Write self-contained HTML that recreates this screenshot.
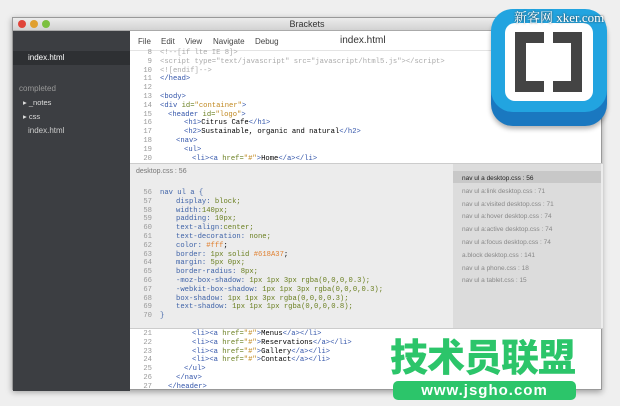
<!DOCTYPE html>
<html><head><meta charset="utf-8"><style>
*{margin:0;padding:0;box-sizing:border-box}
body{width:620px;height:406px;background:#efefef;position:relative;overflow:hidden;font-family:"Liberation Sans",sans-serif}
.win{position:absolute;left:12px;top:17px;width:590px;height:373px;background:#fff;box-shadow:0 2px 6px rgba(0,0,0,.35);border:1px solid #999}
.title{position:absolute;left:0;top:0;width:100%;height:13px;background:linear-gradient(#ececec,#d2d2d2);border-bottom:1px solid #aaa;font-size:9px;text-align:center;line-height:13px;color:#333}
.dot{position:absolute;top:2px;width:8px;height:8px;border-radius:50%}
.side{position:absolute;left:0;top:13px;width:117px;height:360px;background:#3c3e42;color:#ddd;font-size:8px}
.code{font-family:"Liberation Mono",monospace;font-size:7.2px;position:absolute}
.code div,.list div{white-space:pre;height:8.8px}
.ln{color:#999;display:inline-block;width:22px;text-align:right}
.t{color:#3355aa}.s{color:#c08820}.k{color:#3f63a8}.v{color:#6a7f20}.o{color:#e08030}
</style></head><body>
<div class="win">
 <div class="title">Brackets
  <div class="dot" style="left:5px;background:#e0443a"></div>
  <div class="dot" style="left:17px;background:#e0a030"></div>
  <div class="dot" style="left:29px;background:#7cc040"></div>
 </div>
 <div class="side">
  <div style="position:absolute;left:0;top:20px;width:117px;height:14px;background:#2e3033"></div>
  <div style="position:absolute;left:15px;top:22px;color:#fff">index.html</div>
  <div style="position:absolute;left:6px;top:53px;color:#999;font-size:8px">completed</div>
  <div style="position:absolute;left:10px;top:67px;font-size:7.5px;color:#ddd">▸ _notes</div>
  <div style="position:absolute;left:10px;top:81px;font-size:7.5px;color:#ddd">▸ css</div>
  <div style="position:absolute;left:15px;top:95px;color:#ccc">index.html</div>
 </div>
 <div style="position:absolute;left:117px;top:13px;width:473px;height:20px;font-size:8px;color:#444;border-bottom:1px solid #e4e4e4">
  <span style="position:absolute;left:8px;top:6px">File</span>
  <span style="position:absolute;left:31px;top:6px">Edit</span>
  <span style="position:absolute;left:55px;top:6px">View</span>
  <span style="position:absolute;left:83px;top:6px">Navigate</span>
  <span style="position:absolute;left:125px;top:6px">Debug</span>
  <span style="position:absolute;left:210px;top:4px;font-size:10px;color:#333">index.html</span>
 </div>
 <div class="code" style="left:117px;top:31px;line-height:8.8px"><div><span class="ln">8</span><span style="margin-left:8px;color:#aaa">&lt;!--[if lte IE 8]&gt;</span></div><div><span class="ln">9</span><span style="margin-left:8px;color:#aaa">&lt;script type="text/javascript" src="javascript/html5.js"&gt;&lt;/script&gt;</span></div><div><span class="ln">10</span><span style="margin-left:8px;color:#aaa">&lt;![endif]--&gt;</span></div><div><span class="ln">11</span><span style="margin-left:8px" class="t">&lt;/head&gt;</span></div><div><span class="ln">12</span></div><div><span class="ln">13</span><span style="margin-left:8px" class="t">&lt;body&gt;</span></div><div><span class="ln">14</span><span style="margin-left:8px"><span class="t">&lt;div</span> <span class="v">id=</span><span class="s">"container"</span><span class="t">&gt;</span></span></div><div><span class="ln">15</span><span style="margin-left:16px"><span class="t">&lt;header</span> <span class="v">id=</span><span class="s">"logo"</span><span class="t">&gt;</span></span></div><div><span class="ln">16</span><span style="margin-left:32px"><span class="t">&lt;h1&gt;</span>Citrus Cafe<span class="t">&lt;/h1&gt;</span></span></div><div><span class="ln">17</span><span style="margin-left:32px"><span class="t">&lt;h2&gt;</span>Sustainable, organic and natural<span class="t">&lt;/h2&gt;</span></span></div><div><span class="ln">18</span><span style="margin-left:24px" class="t">&lt;nav&gt;</span></div><div><span class="ln">19</span><span style="margin-left:32px" class="t">&lt;ul&gt;</span></div><div><span class="ln">20</span><span style="margin-left:40px"><span class="t">&lt;li&gt;&lt;a</span> <span class="v">href=</span><span class="s">"#"</span><span class="t">&gt;</span>Home<span class="t">&lt;/a&gt;&lt;/li&gt;</span></span></div></div>
 <div style="position:absolute;left:117px;top:145px;width:473px;height:166px;background:#ececec;border-top:1px solid #ccc;border-bottom:1px solid #ccc"></div>
 <div style="position:absolute;left:440px;top:146px;width:148px;height:164px;background:#dcdcdc"></div>
 <div style="position:absolute;left:440px;top:153px;width:148px;height:12px;background:#c8c8c8"></div>
 <div class="list" style="position:absolute;left:449px;top:155px;font-size:6.5px;line-height:12.8px;color:#888"><div style="color:#222;height:12.8px">nav ul a desktop.css : 56</div><div style="height:12.8px">nav ul a:link desktop.css : 71</div><div style="height:12.8px">nav ul a:visited desktop.css : 71</div><div style="height:12.8px">nav ul a:hover desktop.css : 74</div><div style="height:12.8px">nav ul a:active desktop.css : 74</div><div style="height:12.8px">nav ul a:focus desktop.css : 74</div><div style="height:12.8px">a.block desktop.css : 141</div><div style="height:12.8px">nav ul a phone.css : 18</div><div style="height:12.8px">nav ul a tablet.css : 15</div></div>
 <div style="position:absolute;left:123px;top:150px;font-size:7px;color:#777">desktop.css : 56</div>
 <div class="code" style="left:117px;top:171px;line-height:8.8px"><div><span class="ln">56</span><span style="margin-left:8px" class="k">nav ul a {</span></div><div><span class="ln">57</span><span style="margin-left:24px"><span class="k">display:</span> <span class="v">block;</span></span></div><div><span class="ln">58</span><span style="margin-left:24px"><span class="k">width:</span><span class="v">140px;</span></span></div><div><span class="ln">59</span><span style="margin-left:24px"><span class="k">padding:</span> <span class="v">10px;</span></span></div><div><span class="ln">60</span><span style="margin-left:24px"><span class="k">text-align:</span><span class="v">center;</span></span></div><div><span class="ln">61</span><span style="margin-left:24px"><span class="k">text-decoration:</span> <span class="v">none;</span></span></div><div><span class="ln">62</span><span style="margin-left:24px"><span class="k">color:</span> <span class="o">#fff</span>;</span></div><div><span class="ln">63</span><span style="margin-left:24px"><span class="k">border:</span> <span class="v">1px solid</span> <span class="o">#618A37</span>;</span></div><div><span class="ln">64</span><span style="margin-left:24px"><span class="k">margin:</span> <span class="v">5px 0px;</span></span></div><div><span class="ln">65</span><span style="margin-left:24px"><span class="k">border-radius:</span> <span class="v">8px;</span></span></div><div><span class="ln">66</span><span style="margin-left:24px"><span class="k">-moz-box-shadow:</span> <span class="v">1px 1px 3px rgba(0,0,0,0.3);</span></span></div><div><span class="ln">67</span><span style="margin-left:24px"><span class="k">-webkit-box-shadow:</span> <span class="v">1px 1px 3px rgba(0,0,0,0.3);</span></span></div><div><span class="ln">68</span><span style="margin-left:24px"><span class="k">box-shadow:</span> <span class="v">1px 1px 3px rgba(0,0,0,0.3);</span></span></div><div><span class="ln">69</span><span style="margin-left:24px"><span class="k">text-shadow:</span> <span class="v">1px 1px 1px rgba(0,0,0,0.8);</span></span></div><div><span class="ln">70</span><span style="margin-left:8px" class="k">}</span></div></div>
 <div class="code" style="left:117px;top:312px;line-height:8.8px"><div><span class="ln">21</span><span style="margin-left:40px"><span class="t">&lt;li&gt;&lt;a</span> <span class="v">href=</span><span class="s">"#"</span><span class="t">&gt;</span>Menus<span class="t">&lt;/a&gt;&lt;/li&gt;</span></span></div><div><span class="ln">22</span><span style="margin-left:40px"><span class="t">&lt;li&gt;&lt;a</span> <span class="v">href=</span><span class="s">"#"</span><span class="t">&gt;</span>Reservations<span class="t">&lt;/a&gt;&lt;/li&gt;</span></span></div><div><span class="ln">23</span><span style="margin-left:40px"><span class="t">&lt;li&gt;&lt;a</span> <span class="v">href=</span><span class="s">"#"</span><span class="t">&gt;</span>Gallery<span class="t">&lt;/a&gt;&lt;/li&gt;</span></span></div><div><span class="ln">24</span><span style="margin-left:40px"><span class="t">&lt;li&gt;&lt;a</span> <span class="v">href=</span><span class="s">"#"</span><span class="t">&gt;</span>Contact<span class="t">&lt;/a&gt;&lt;/li&gt;</span></span></div><div><span class="ln">25</span><span style="margin-left:32px" class="t">&lt;/ul&gt;</span></div><div><span class="ln">26</span><span style="margin-left:24px" class="t">&lt;/nav&gt;</span></div><div><span class="ln">27</span><span style="margin-left:16px" class="t">&lt;/header&gt;</span></div></div>
</div>
<div style="position:absolute;left:491px;top:12px;width:116px;height:114px;border-radius:22px;background:#1a78c0;box-shadow:0 3px 5px rgba(0,0,0,.3)"></div>
<div style="position:absolute;left:491px;top:9px;width:116px;height:103px;border-radius:22px;background:#22a4e0"></div>
<div style="position:absolute;left:505px;top:23px;width:88px;height:78px;border-radius:10px;background:#fff"></div>
<div style="position:absolute;left:515px;top:32px;width:29px;height:60px;background:#444"></div>
<div style="position:absolute;left:526px;top:43px;width:18px;height:38px;background:#fff"></div>
<div style="position:absolute;left:553px;top:32px;width:29px;height:60px;background:#444"></div>
<div style="position:absolute;left:553px;top:43px;width:18px;height:38px;background:#fff"></div>
<div style="position:absolute;left:514px;top:7px;font-family:'Liberation Serif','Noto Serif CJK SC',serif;font-size:13px;color:#fff;text-shadow:0 0 2px #333">新客网 xker.com</div>
<div style="position:absolute;left:390px;top:333px;font-family:'Noto Sans CJK SC',sans-serif;font-weight:900;font-size:38px;letter-spacing:-1px;color:#2cc56a;line-height:44px">技术员联盟</div>
<div style="position:absolute;left:393px;top:381px;width:183px;height:19px;border-radius:5px;background:#2cc56a;color:#fff;font-weight:bold;font-size:15px;text-align:center;line-height:19px;letter-spacing:1px">www.jsgho.com</div>
</body></html>
